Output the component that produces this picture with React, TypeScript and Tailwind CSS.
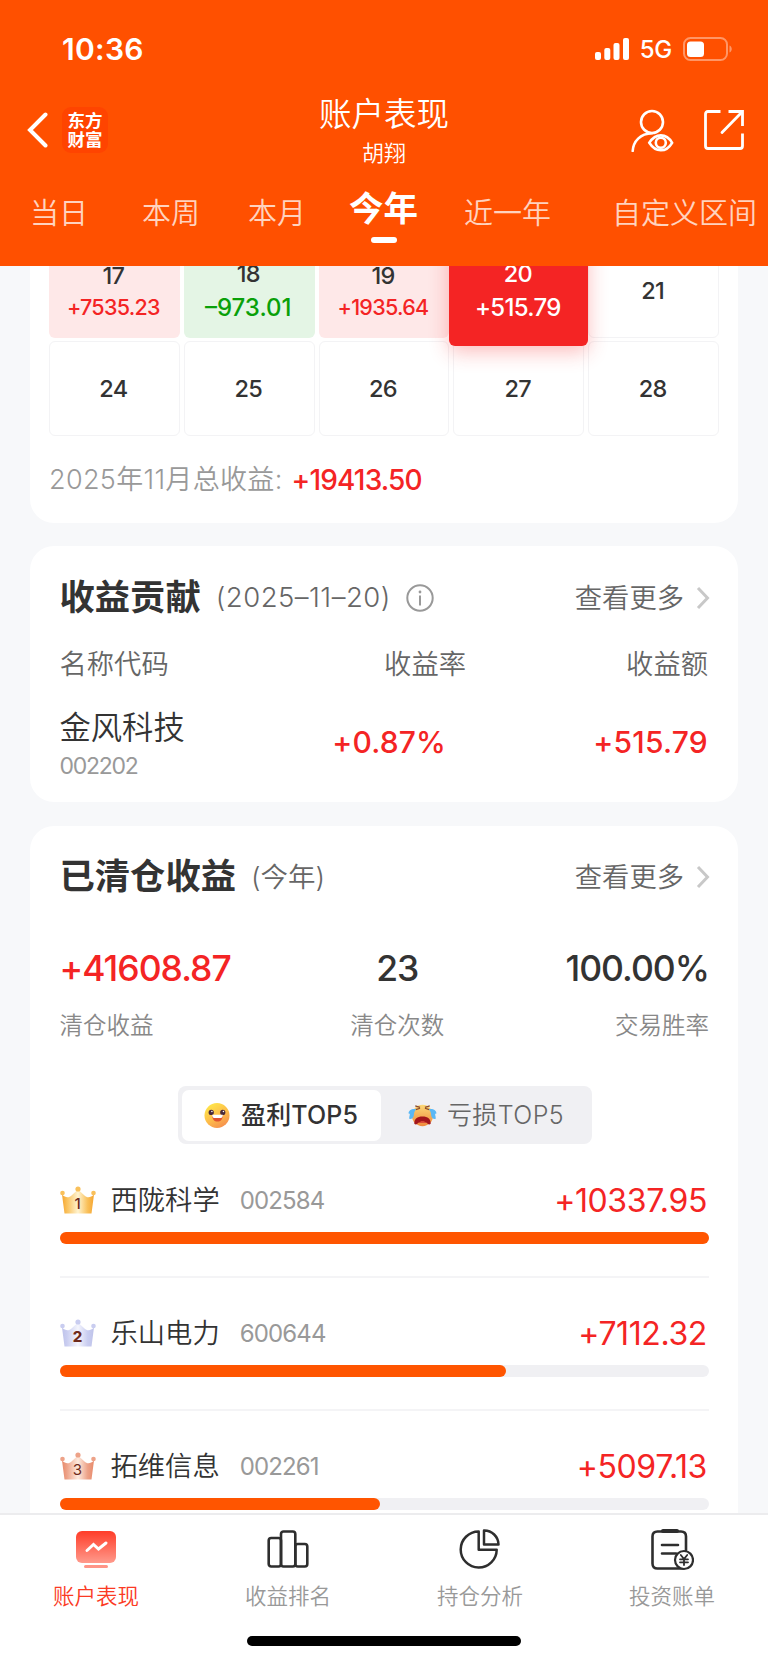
import { useState } from "react";
import type { ReactNode } from "react";
import clsx from "clsx";

type Day = {
  day: number;
  profit?: string;
  tone?: "up" | "down" | "selected";
};

const DAYS: Day[] = [
  { day: 17, profit: "+7535.23", tone: "up" },
  { day: 18, profit: "–973.01", tone: "down" },
  { day: 19, profit: "+1935.64", tone: "up" },
  { day: 20, profit: "+515.79", tone: "selected" },
  { day: 21 },
  { day: 24 },
  { day: 25 },
  { day: 26 },
  { day: 27 },
  { day: 28 },
];

const PERIODS = [
  { label: "当日", className: "ml-[30px]" },
  { label: "本周", className: "ml-[54px]" },
  { label: "本月", className: "ml-[48px]" },
  { label: "今年", className: "ml-[43px]" },
  { label: "近一年", className: "ml-[46px]" },
  { label: "自定义区间", className: "ml-[61px]" },
];

const STOCKS = [
  { name: "西陇科学", code: "002584", profit: "+10337.95", percent: 100 },
  { name: "乐山电力", code: "600644", profit: "+7112.32", percent: 68.8 },
  { name: "拓维信息", code: "002261", profit: "+5097.13", percent: 49.3 },
];

const CROWNS = [
  { edge: "#f6a52f", mid: "#fff3cf", dot: "#f9c05a", weight: 500 },
  { edge: "#bfc3ea", mid: "#f4f5fd", dot: "#c9cdf0", weight: 800 },
  { edge: "#e88a6b", mid: "#fdeade", dot: "#eda288", weight: 400 },
];

export default function App() {
  return (
    <div className="flex h-[1663px] w-[768px] flex-col overflow-hidden bg-[#f7f8fa] font-['Inter','Noto_Sans_CJK_SC',sans-serif] text-[#333]">
      <Header />
      <main className="min-h-0 flex-1 overflow-hidden px-[30px]">
        <CalendarCard />
        <ContributionCard />
        <ClearedCard />
      </main>
      <BottomNav />
    </div>
  );
}

function Header() {
  const [active, setActive] = useState("今年");

  return (
    <header className="relative z-10 h-[266px] shrink-0 bg-[#ff5000] text-white">
      <div className="flex h-[92px] items-center pt-[6px] pr-[35px] pl-[62px]">
        <span className="text-[30px] font-semibold tracking-[0.01em]">10:36</span>
        <div className="ml-auto flex items-center">
          <SignalIcon />
          <span className="ml-[10px] pt-[2px] text-[24px] font-medium tracking-[-0.01em]">5G</span>
          <BatteryIcon />
        </div>
      </div>

      <div className="grid h-[76px] grid-cols-[1fr_auto_1fr] items-center">
        <div className="flex items-center pl-[27px]">
          <svg width="21" height="36" viewBox="0 0 21 36" fill="none">
            <path d="M18.5 2.5 3 18l15.5 15.5" stroke="#fff" strokeWidth="4" strokeLinecap="round" />
          </svg>
          <div className="ml-[14px] flex h-[46px] w-[46px] flex-col items-center justify-center rounded-[9px] bg-[#ff4400] text-[17.5px] leading-[19px] font-bold">
            <span>东方</span>
            <span>财富</span>
          </div>
        </div>
        <div className="flex h-[76px] flex-col items-center">
          <h1 className="pt-px text-[32.5px] leading-[44px] font-[350]">账户表现</h1>
          <span className="text-[22px] leading-[33px] font-[350]">胡翔</span>
        </div>
        <div className="flex items-center justify-end gap-[30px] pr-[24px]">
          <UserEyeIcon />
          <ShareIcon />
        </div>
      </div>

      <nav className="flex items-start pt-[18px] whitespace-nowrap">
        {PERIODS.map((p) => (
          <button
            key={p.label}
            onClick={() => setActive(p.label)}
            className={clsx("flex flex-col items-center", p.className)}
          >
            {active === p.label ? (
              <>
                <span className="text-[34.5px] leading-[46px] font-bold">{p.label}</span>
                <span className="mt-[5px] h-[6px] w-[26px] rounded-full bg-white" />
              </>
            ) : (
              <span className="mt-[6px] text-[29px] leading-[44px] font-[350] text-white/75">
                {p.label}
              </span>
            )}
          </button>
        ))}
      </nav>
    </header>
  );
}

function CalendarCard() {
  return (
    <section className="-mt-10 rounded-[24px] bg-white px-[19px] pt-[17px] pb-[19px]">
      <div className="grid grid-cols-5 gap-x-1 gap-y-[3px]">
        {DAYS.map((d) => (
          <DayCell key={d.day} {...d} />
        ))}
      </div>
      <div className="mt-5 flex h-12 items-center text-[27px] font-[350] text-[#999]">
        <span className="pt-px tracking-[0.012em]">2025年11月总收益:</span>
        <span className="ml-[9px] text-[28px] font-medium tracking-[-0.03em] text-[#f42424]">
          +19413.50
        </span>
      </div>
    </section>
  );
}

function DayCell({ day, profit, tone }: Day) {
  return (
    <div
      className={clsx(
        "flex flex-col items-center justify-center rounded-[6px] pr-[2px] text-[23.5px] font-medium tracking-[-0.03em]",
        !tone && "h-[95px] border border-[#f3f3f5]",
        tone === "up" && "h-[95px] bg-[#fee8e8]",
        tone === "down" && "h-[95px] bg-[#e4f5e5]",
        tone === "selected" &&
          "relative -mx-1 -my-2 h-[111px] bg-[#f42424] text-white shadow-[0_6px_20px_rgba(244,36,36,0.3)]"
      )}
    >
      <span className={clsx("leading-[33px]", tone === "up" && "mt-[2px]")}>{day}</span>
      {profit && (
        <span
          className={clsx(
            tone === "up" && "-mt-px text-[21.5px] leading-[33px] text-[#f42424]",
            tone === "down" && "text-[24px] leading-[35px] tracking-normal text-[#09a009]",
            tone === "selected" && "text-[24px] leading-[35px]"
          )}
        >
          {profit}
        </span>
      )}
    </div>
  );
}

function CardTitle({ title, children }: { title: string; children: ReactNode }) {
  return (
    <div className="flex h-12 items-center">
      <h2 className="text-[35.3px] leading-[48px] font-bold">{title}</h2>
      {children}
      <button className="-mr-px ml-auto flex items-center text-[27.3px] font-[350] text-[#666]">
        <span className="pt-[2px]">查看更多</span>
        <svg className="ml-[12px]" width="14" height="24" viewBox="0 0 14 24" fill="none">
          <path d="M2 2l9.500 10L2 22" stroke="#c8c8c8" strokeWidth="3" />
        </svg>
      </button>
    </div>
  );
}

function ContributionCard() {
  return (
    <section className="mt-[23px] h-[256px] rounded-[24px] bg-white pt-7 pr-[29px] pl-[29.5px]">
      <CardTitle title="收益贡献">
        <span className="ml-[15px] text-[27.500px] font-[350] tracking-[0.018em] text-[#666]">
          (2025–11–20)
        </span>
        <svg className="ml-[15px]" width="28" height="28" viewBox="0 0 28 28" fill="none">
          <circle cx="14" cy="14" r="12.700" stroke="#999" strokeWidth="2" />
          <path d="M14 11.500v10" stroke="#999" strokeWidth="2" />
          <circle cx="14" cy="8" r="1.400" fill="#999" />
        </svg>
      </CardTitle>
      <div className="mt-[23px] grid h-9 grid-cols-[1fr_160px_243px] items-center text-[27.300px] font-[350] text-[#666]">
        <span>名称代码</span>
        <span className="text-right">收益率</span>
        <span className="pr-px text-right">收益额</span>
      </div>
      <div className="mt-px grid h-[120px] grid-cols-[1fr_160px_263px] items-center text-right text-[30px] font-medium text-[#f42424]">
        <div className="flex flex-col pt-[4px] text-left font-[350]">
          <span className="text-[31.3px] leading-[44px] text-[#333]">金风科技</span>
          <span className="text-[23px] leading-8 font-normal tracking-[-0.055em] text-[#999]">
            002202
          </span>
        </div>
        <span className="tracking-[0.005em]">+0.87%</span>
        <span className="pr-px tracking-[0.008em]">+515.79</span>
      </div>
    </section>
  );
}

function ClearedCard() {
  const [tab, setTab] = useState("win");

  return (
    <section className="mt-6 rounded-t-[24px] bg-white pt-[27px] pr-[29px] pl-[29.5px]">
      <CardTitle title="已清仓收益">
        <span className="ml-[15px] pt-[2px] text-[27.500px] font-[350] text-[#666]">(今年)</span>
      </CardTitle>
      <div className="mt-11 grid grid-cols-3">
        <Stat value="+41608.87" label="清仓收益" className="items-start text-[#f42424]" />
        <Stat value="23" label="清仓次数" className="items-center pl-[26px]" />
        <Stat value="100.00%" label="交易胜率" className="items-end" />
      </div>

      <div className="mt-[44px] ml-[118px] flex h-[58px] w-[414px] items-center rounded-[8px] bg-[#f0f0f3] p-[4px]">
        <SegmentButton
          active={tab === "win"}
          onClick={() => setTab("win")}
          className="w-[199px] gap-[11px]"
        >
          <HappyFace />
          <span className="pt-[2px]">盈利TOP5</span>
        </SegmentButton>
        <SegmentButton
          active={tab === "loss"}
          onClick={() => setTab("loss")}
          className="flex-1 gap-[10px] pl-[4px]"
        >
          <CryingFace />
          <span className="pt-[2px]">亏损TOP5</span>
        </SegmentButton>
      </div>

      <ul className="mt-px">
        {STOCKS.map((s, i) => (
          <li key={s.code} className="border-b-2 border-[#f4f4f6] pt-[31px] pb-8">
            <div className="flex h-12 items-center">
              <Crown rank={i} />
              <span className="ml-[15px] pt-[2px] text-[27.300px] font-[350]">{s.name}</span>
              <span className="ml-[20px] pt-px text-[24px] tracking-[-0.036em] text-[#999]">
                {s.code}
              </span>
              <span className="ml-auto pt-px pr-[2px] text-[32px] tracking-[-0.012em] text-[#f42424]">
                {s.profit}
              </span>
            </div>
            <div className="mt-2 h-3 rounded-full bg-[#f0f0f3]">
              <div
                className="h-full rounded-full bg-[#ff5500]"
                style={{ width: `${s.percent}%` }}
              />
            </div>
          </li>
        ))}
      </ul>
    </section>
  );
}

function Stat({ value, label, className }: { value: string; label: string; className: string }) {
  return (
    <div className={clsx("flex flex-col", className)}>
      <span className="text-[35.5px] leading-[48px] font-medium tracking-[-0.028em]">{value}</span>
      <span className="mt-[17px] text-[23.500px] leading-8 font-[350] text-[#888]">{label}</span>
    </div>
  );
}

function SegmentButton({
  active,
  onClick,
  className,
  children,
}: {
  active: boolean;
  onClick: () => void;
  className: string;
  children: ReactNode;
}) {
  return (
    <button
      onClick={onClick}
      className={clsx(
        "flex h-[51px] items-center justify-center rounded-[7px] text-[25px]",
        active
          ? "bg-white font-medium tracking-[0.005em] text-[#333]"
          : "font-[350] tracking-[0.016em] text-[#666]",
        className
      )}
    >
      {children}
    </button>
  );
}

function BottomNav() {
  const items = [
    { label: "账户表现", icon: <AccountIcon />, active: true },
    { label: "收益排名", icon: <RankIcon /> },
    { label: "持仓分析", icon: <PieIcon /> },
    { label: "投资账单", icon: <BillIcon /> },
  ];

  return (
    <footer className="h-[150px] shrink-0 border-t-2 border-[#ececee] bg-white">
      <div className="grid grid-cols-4">
        {items.map((item) => (
          <button key={item.label} className="flex flex-col items-center pt-[13px]">
            {item.icon}
            <span
              className={clsx(
                "mt-[8px] text-[21.500px] leading-8 font-[350]",
                item.active ? "text-[#fb3a24]" : "text-[#999]"
              )}
            >
              {item.label}
            </span>
          </button>
        ))}
      </div>
      <div className="mx-auto mt-[24px] h-[10px] w-[274px] rounded-full bg-black" />
    </footer>
  );
}

/* ---------- icons ---------- */

function SignalIcon() {
  return (
    <svg width="35" height="24" viewBox="0 0 35 24" fill="#fff">
      <rect x="0" y="15" width="6" height="8" rx="2" />
      <rect x="9.300" y="11" width="6" height="12" rx="2" />
      <rect x="18.500" y="6" width="6" height="17" rx="2" />
      <rect x="28" y="1" width="6" height="22" rx="2" />
    </svg>
  );
}

function BatteryIcon() {
  return (
    <svg className="ml-[11px]" width="50" height="24" viewBox="0 0 50 24" fill="none">
      <rect x="1" y="1" width="43" height="22" rx="6.500" stroke="#fff" strokeOpacity="0.4" strokeWidth="2" />
      <rect x="4" y="4.500" width="17" height="15.500" rx="3.500" fill="#fff" />
      <path d="M46.500 8.500c3 1.200 3 5.800 0 7z" fill="#fff" fillOpacity="0.4" />
    </svg>
  );
}

function UserEyeIcon() {
  return (
    <svg width="43" height="43" viewBox="0 0 43 43" fill="none" stroke="#fff" strokeWidth="2.600">
      <circle cx="21" cy="13" r="11" />
      <path d="M1.700 42c.6-9.500 7.500-17.500 19.300-17.800" strokeLinecap="round" />
      <path d="M18.300 33.800c3.200-5 7.100-7.400 11.500-7.400s8.400 2.400 11.300 7.400c-2.900 5-6.900 7.500-11.300 7.500s-8.300-2.500-11.500-7.500Z" />
      <circle cx="29.800" cy="33.700" r="5" />
    </svg>
  );
}

function ShareIcon() {
  return (
    <svg width="40" height="40" viewBox="0 0 40 40" fill="none" stroke="#fff" strokeWidth="2.800">
      <path d="M16.500 1.500H4Q1.500 1.500 1.500 4v32q0 2.500 2.500 2.500h32q2.500 0 2.500-2.500V23.500" />
      <path d="M24.500 1.500h14v14.500" />
      <path d="M37.500 2.500 18 22.500" strokeLinecap="round" />
    </svg>
  );
}

function HappyFace() {
  return (
    <svg width="26" height="27" viewBox="0 0 27 27">
      <defs>
        <linearGradient id="happy" x1="0.200" y1="0" x2="0.800" y2="1">
          <stop offset="0" stopColor="#ffe94a" />
          <stop offset="0.550" stopColor="#fdbb4a" />
          <stop offset="1" stopColor="#f58a4e" />
        </linearGradient>
      </defs>
      <circle cx="13.500" cy="13.500" r="13" fill="url(#happy)" />
      <circle cx="7.500" cy="10.300" r="2.700" fill="#4a2a3a" />
      <circle cx="19.500" cy="10.300" r="2.700" fill="#4a2a3a" />
      <circle cx="8.200" cy="9.400" r="0.800" fill="#fff" />
      <circle cx="20.200" cy="9.400" r="0.800" fill="#fff" />
      <path d="M8.500 13.500h11c0 4-2.200 6.300-5.500 6.300s-5.500-2.300-5.500-6.300Z" fill="#e0522f" />
      <path d="M8.500 12.800h11c0 2.400-1 3.200-2 3.200h-7c-1 0-2-.8-2-3.200Z" fill="#fff" />
    </svg>
  );
}

function CryingFace() {
  return (
    <svg width="29" height="25" viewBox="0 0 30 25">
      <defs>
        <linearGradient id="cry" x1="0" y1="0" x2="0" y2="1">
          <stop offset="0" stopColor="#fbd877" />
          <stop offset="1" stopColor="#f08a3c" />
        </linearGradient>
      </defs>
      <circle cx="15" cy="12.500" r="11" fill="url(#cry)" />
      <path d="M7.500 2.500 12.500 4M22.500 2.500 17.500 4M8 6.500l4.500-1.500M22 6.500l-4.500-1.500" stroke="#8b4a2a" strokeWidth="1.300" fill="none" />
      <path d="M8.500 6C4 5 .5 7.500.5 10.500c3-.5 0 3.500 1 5.500 2.500.5 4-1 4.500-3.500C6.200 9.800 6.500 8 8.500 6Z" fill="#5bb8f5" />
      <path d="M21.500 6c4.500-1 8 1.500 8 4.500-3-.5 0 3.500-1 5.500-2.500.5-4-1-4.500-3.500-.2-2.700-.5-4.500-2.500-6.500Z" fill="#5bb8f5" />
      <path d="M6.500 21c0-5 3-7.500 8.500-7.500s8.500 2.500 8.500 7.500c-1.500 1.500-3 .5-4-1h-9c-1 1.500-2.500 2.500-4 1Z" fill="#a3161b" />
      <path d="M11 20c1.500-2.200 6.500-2.200 8 0Z" fill="#e8543f" />
    </svg>
  );
}

function Crown({ rank }: { rank: number }) {
  const c = CROWNS[rank];
  const id = `crown-${rank}`;
  return (
    <svg width="36" height="28" viewBox="0 0 36 28">
      <defs>
        <linearGradient id={id}>
          <stop offset="0" stopColor={c.edge} />
          <stop offset="0.150" stopColor={c.dot} />
          <stop offset="0.500" stopColor={c.mid} />
          <stop offset="0.800" stopColor={c.dot} />
          <stop offset="1" stopColor={c.edge} />
        </linearGradient>
      </defs>
      <path
        d="M2 8.500c3.500 3.500 7 3.500 9.500 1L18 3.500l6.500 6c2.500 2.500 6 2.500 9.500-1L31.500 27.500h-27Z"
        fill={`url(#${id})`}
      />
      <circle cx="18" cy="3" r="2.600" fill={c.dot} />
      <circle cx="2.500" cy="7" r="2.300" fill={c.dot} />
      <circle cx="33.500" cy="7" r="2.300" fill={c.dot} />
      <text x="17.500" y="23" textAnchor="middle" fontSize="15" fontWeight={c.weight} fill="#6e2a1c">
        {rank + 1}
      </text>
    </svg>
  );
}

function AccountIcon() {
  return (
    <svg width="44" height="44" viewBox="0 0 44 44" fill="none">
      <defs>
        <linearGradient id="account" x1="0" y1="0" x2="0" y2="1">
          <stop offset="0" stopColor="#ff3c28" />
          <stop offset="1" stopColor="#ff9a8c" />
        </linearGradient>
      </defs>
      <rect x="2" y="3" width="40" height="32" rx="6" fill="url(#account)" />
      <path d="M13 22.500l6.500-6 5 4.500 7.500-6" stroke="#fff" strokeWidth="3" strokeLinecap="round" />
      <rect x="10" y="37" width="24" height="3" rx="1.500" fill="#ff9587" />
    </svg>
  );
}

function RankIcon() {
  return (
    <svg width="44" height="44" viewBox="0 0 44 44" fill="none" stroke="#2e2e2e" strokeWidth="2.600">
      <rect x="2.700" y="10" width="12.300" height="28.500" rx="2.500" />
      <rect x="15" y="3.500" width="14.300" height="35" rx="2.500" />
      <rect x="29.300" y="16" width="12" height="22.500" rx="2.500" />
    </svg>
  );
}

function PieIcon() {
  return (
    <svg width="44" height="44" viewBox="0 0 44 44" fill="none" stroke="#2e2e2e" strokeWidth="2.500" strokeLinejoin="round">
      <path d="M20.700 3.500A18 18 0 1 0 38.700 21.700H20.700Z" />
      <path d="M26 2.500V16.500H40.500A14.200 14.200 0 0 0 26 2.500Z" />
    </svg>
  );
}

function BillIcon() {
  return (
    <svg width="44" height="44" viewBox="0 0 44 44" fill="none" stroke="#2e2e2e" strokeWidth="2.600" strokeLinecap="round">
      <path d="M33 40.500H7.500q-5 0-5-5V8.500q0-5 5-5H31q5 0 5 5V22" />
      <path d="M13 3h14" strokeWidth="4" />
      <path d="M12 17h16M12 25.500h14" />
      <circle cx="34" cy="32" r="9" fill="#fff" strokeWidth="2.200" />
      <path d="M30.800 27l3.200 4 3.200-4M34 31v6M30 31.300h8M30 34.300h8" strokeWidth="1.800" />
    </svg>
  );
}
